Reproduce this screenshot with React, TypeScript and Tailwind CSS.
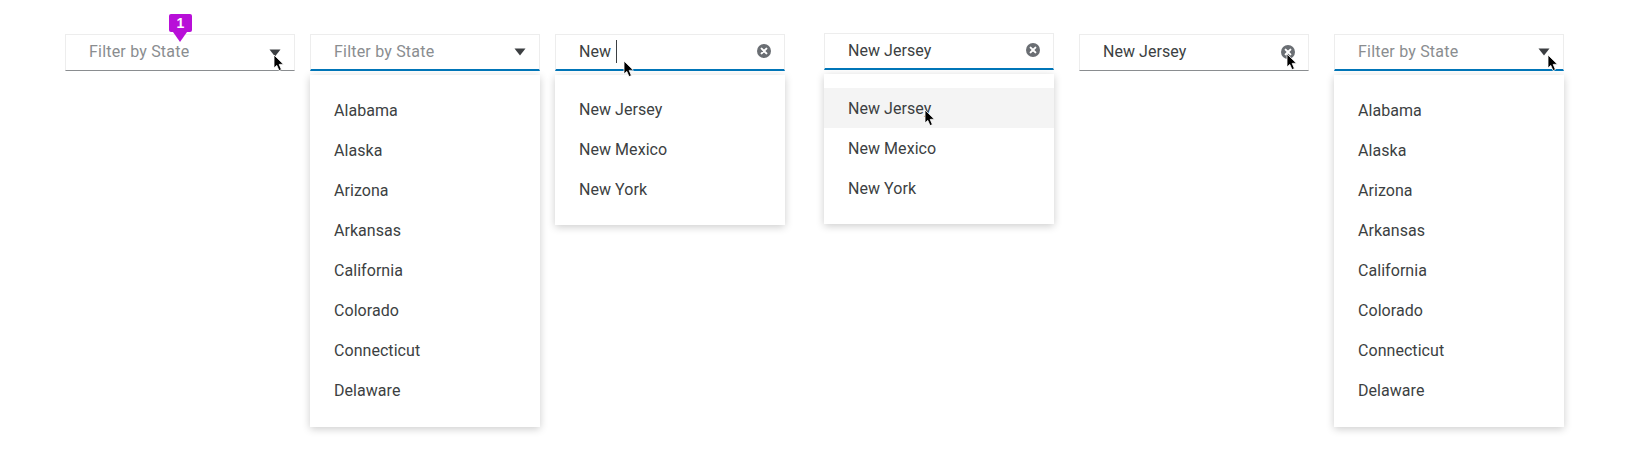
import React from "react";

const states = ["Alabama", "Alaska", "Arizona", "Arkansas", "California", "Colorado", "Connecticut", "Delaware"];
const news = ["New Jersey", "New Mexico", "New York"];

function Cursor({ className }: { className: string }) {
  return (
    <svg className={`absolute z-20 ${className}`} width="12" height="18" viewBox="0 0 12 18">
      <path d="M1 1 L1 14 L3.8 11.4 L6 16.6 L8.4 15.6 L6.2 10.4 L10.4 10.2 Z" fill="#000" stroke="#fff" strokeWidth="0.8" strokeLinejoin="round" />
    </svg>
  );
}

function Caret() {
  return (
    <svg className="mt-[2px] shrink-0" width="12" height="8" viewBox="0 0 12 8">
      <path d="M0.5 0.5 H11.5 L6 7.5 Z" fill="#3c3f42" />
    </svg>
  );
}

function Clear() {
  return (
    <svg className="shrink-0" width="14" height="14" viewBox="0 0 14 14">
      <circle cx="7" cy="7" r="7" fill="#6a6e73" />
      <path d="M4.6 4.6 L9.4 9.4 M9.4 4.6 L4.6 9.4" stroke="#fff" strokeWidth="2" strokeLinecap="round" />
    </svg>
  );
}

function Field({ active, children }: { active?: boolean; children: React.ReactNode }) {
  return (
    <div
      className={`flex h-[37px] items-center justify-between border-x border-t border-[#ededed] pb-[2px] pl-[23px] pr-[13px] text-[16px] leading-[22px] ${
        active ? "border-b-2 border-b-[#0076b9]" : "border-b border-b-[#8a8d90]"
      }`}
    >
      {children}
    </div>
  );
}

function Menu({ items, highlight, tall }: { items: string[]; highlight?: string; tall?: boolean }) {
  return (
    <div className={`mt-[4px] bg-white shadow-[0_2px_8px_rgba(3,3,3,0.2)] ${tall ? "pb-[17px] pt-[15px]" : "pb-[16px] pt-[14px]"}`}>
      {items.map((s) => (
        <div
          key={s}
          className={`h-[40px] pl-[24px] text-[16px] leading-[42px] tracking-[0.05px] text-[#3c3f42] ${s === highlight ? "bg-[#f4f4f4]" : ""}`}
        >
          {s}
        </div>
      ))}
    </div>
  );
}

const placeholder = "tracking-[0.2px] text-[#8a8d90]";
const placeholderActive = "pt-[2px] tracking-[0.2px] text-[#8a8d90]";
const value = "tracking-[0.05px] text-[#3c3f42]";
const valueActive = "pt-[2px] tracking-[0.05px] text-[#3c3f42]";

export default function App() {
  return (
    <div className="h-[460px] w-[1629px] overflow-hidden bg-white pl-[65px] pt-[34px] font-['Roboto','Noto_Sans',sans-serif]">
      <div className="flex items-start">
        <div className="relative w-[230px]">
          <div className="absolute left-[104px] top-[-20px] z-10 flex h-[18px] w-[23px] justify-center rounded-[2px] bg-[#b80fd8] font-['Liberation_Sans',sans-serif] text-[14px] font-bold leading-[19px] text-white">
            1
            <div className="absolute left-[4px] top-[18px] h-0 w-0 border-x-[7.5px] border-t-[10px] border-x-transparent border-t-[#b80fd8]" />
          </div>
          <Field>
            <span className={placeholder}>Filter by State</span>
            <Caret />
          </Field>
          <Cursor className="left-[208px] top-[20px]" />
        </div>

        <div className="ml-[15px] w-[230px]">
          <Field active>
            <span className={placeholderActive}>Filter by State</span>
            <Caret />
          </Field>
          <Menu items={states} tall />
        </div>

        <div className="relative ml-[15px] w-[230px]">
          <Field active>
            <span className="flex items-center">
              <span className={valueActive}>New</span>
              <span className="ml-[5px] h-[23px] w-[1px] bg-[#3c3f42]" />
            </span>
            <Clear />
          </Field>
          <Cursor className="left-[68px] top-[26px]" />
          <Menu items={news} />
        </div>

        <div className="relative ml-[39px] mt-[-1px] w-[230px]">
          <Field active>
            <span className={valueActive}>New Jersey</span>
            <Clear />
          </Field>
          <Menu items={news} highlight="New Jersey" />
          <Cursor className="left-[100px] top-[76px]" />
        </div>

        <div className="relative ml-[25px] w-[230px]">
          <Field>
            <span className={value}>New Jersey</span>
            <Clear />
          </Field>
          <Cursor className="left-[207px] top-[19px]" />
        </div>

        <div className="relative ml-[25px] w-[230px]">
          <Field active>
            <span className={placeholderActive}>Filter by State</span>
            <Caret />
          </Field>
          <Cursor className="left-[213px] top-[20px]" />
          <Menu items={states} tall />
        </div>
      </div>
    </div>
  );
}
